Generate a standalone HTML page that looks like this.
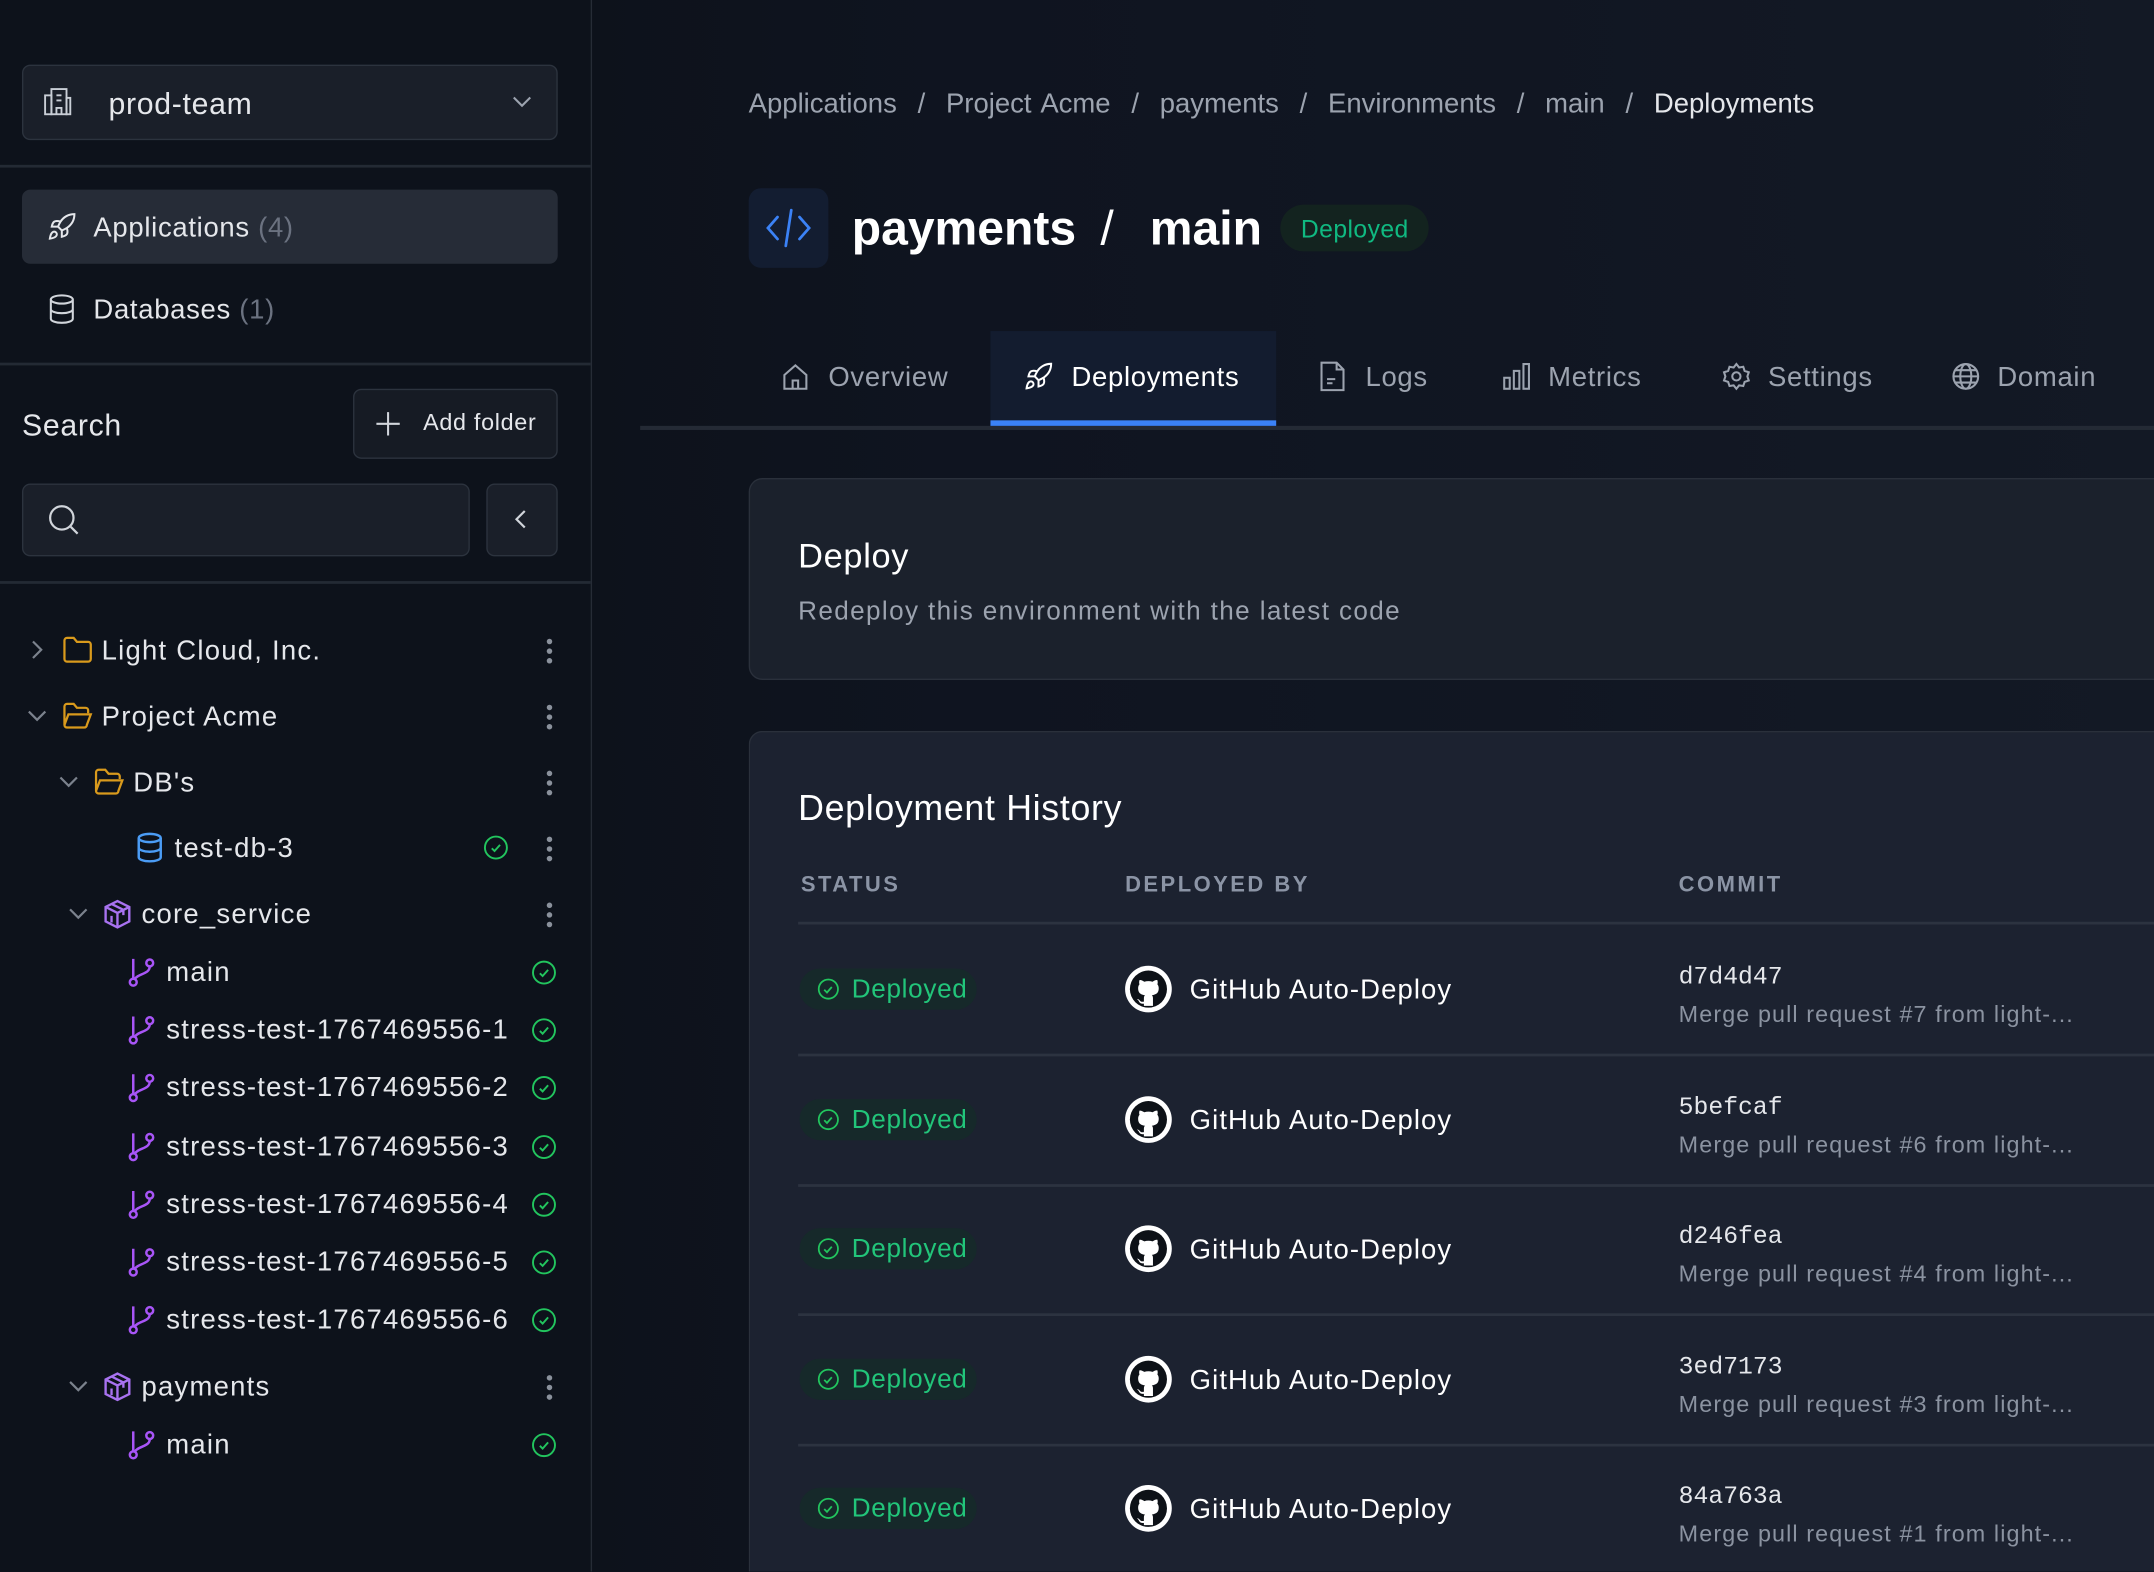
<!DOCTYPE html>
<html><head><meta charset="utf-8"><style>
html,body{margin:0;padding:0;width:2154px;height:1572px;overflow:hidden;background:#0e131c}
#w{position:absolute;left:0;top:0;width:1568px;height:1144px;overflow:hidden;transform:scale(1.37372);transform-origin:0 0;font-family:"Liberation Sans",sans-serif;color:#e5e7eb;background:linear-gradient(90deg,#0d121b 0,#0d121b 430px,#0f1420 700px,#131925 1568px);letter-spacing:0.5px}
.a{position:absolute}
.side{left:0;top:0;width:430px;height:1144px;background:#0d121b;border-right:1px solid #262c36}
.hr{position:absolute;left:0;width:430px;height:2px;background:#232a34}
.box{position:absolute;background:#1a1f29;border:1.5px solid #2c333e;border-radius:6px;box-sizing:border-box}
.t{position:absolute;white-space:nowrap;line-height:1}
.g{color:#6b7280}
svg{position:absolute;overflow:visible}
.dots{position:absolute;left:398px;width:4px}
.dots i{display:block;width:4px;height:4px;border-radius:2px;background:#8a919c;margin-bottom:3px}
.tab{position:absolute;top:264px;font-size:20px;color:#9ca3af}
.bdg{position:absolute;left:582px;width:129px;height:30px;border-radius:15px;background:#16292a}
.row{position:absolute;left:581px;width:1000px;height:2px;background:#2c3340}
.tr{font-size:20px;letter-spacing:0.9px}
.ti{position:absolute;top:149px;font-size:35px;font-weight:bold;color:#fff;letter-spacing:0;line-height:1;white-space:nowrap}
</style></head><body><div id="w">
<div class="a side"></div>
<div class="box" style="left:16px;top:47px;width:390px;height:55px"></div>
<svg style="left:31px;top:63px" width="22" height="22" viewBox="0 0 24 24" fill="none" stroke="#c9ced6" stroke-width="1.5"><rect x="2" y="7" width="5" height="15"/><rect x="7" y="2" width="12" height="20"/><rect x="19" y="9" width="3" height="13"/><path d="M11 7h4M11 11h4M11 22v-5h4v5"/></svg>
<div class="t" style="left:79px;top:65px;font-size:22px;color:#e5e7eb">prod-team</div>
<svg style="left:373px;top:70px" width="14" height="8" viewBox="0 0 14 8" fill="none" stroke="#9ca3af" stroke-width="1.5"><path d="M1 1l6 6 6-6"/></svg>
<div class="hr" style="top:120px"></div>
<div class="a" style="left:16px;top:138px;width:390px;height:54px;background:#262c37;border-radius:6px"></div>
<svg style="left:34px;top:154px" width="22" height="22" viewBox="0 0 24 24" fill="none" stroke="#e5e7eb" stroke-width="1.6"><path d="M4.5 16.5c-1.5 1.3-2 5-2 5s3.7-.5 5-2c.7-.8.7-2.1-.1-2.9-.8-.8-2.1-.8-2.9-.1zM12 15l-3-3a22 22 0 0 1 2-4A12.9 12.9 0 0 1 22 2c0 2.7-.8 7.5-6 11a22 22 0 0 1-4 2z"/><path d="M9 12H4s.6-3 2-4c1.6-1 5 0 5 0M12 15v5s3-.6 4-2c1-1.6 0-5 0-5"/></svg>
<div class="t" style="left:68px;top:156px;font-size:20px">Applications <span class="g">(4)</span></div>
<svg style="left:35px;top:214px" width="20" height="22" viewBox="0 0 20 22" fill="none" stroke="#d1d5db" stroke-width="1.5"><ellipse cx="10" cy="4" rx="8" ry="3"/><path d="M2 4v14c0 1.7 3.6 3 8 3s8-1.3 8-3V4M2 11c0 1.7 3.6 3 8 3s8-1.3 8-3"/></svg>
<div class="t" style="left:68px;top:216px;font-size:20px">Databases <span class="g">(1)</span></div>
<div class="hr" style="top:264px"></div>
<div class="t" style="left:16px;top:299px;font-size:22px">Search</div>
<div class="box" style="left:257px;top:283px;width:149px;height:51px;background:#161b24"></div>
<svg style="left:274px;top:300px" width="17" height="17" viewBox="0 0 17 17" stroke="#d1d5db" stroke-width="1.5"><path d="M8.5 0v17M0 8.5h17"/></svg>
<div class="t" style="left:308px;top:299px;font-size:17px">Add folder</div>
<div class="box" style="left:16px;top:352px;width:326px;height:53px"></div>
<svg style="left:35px;top:367px" width="24" height="24" viewBox="0 0 24 24" fill="none" stroke="#d1d5db" stroke-width="1.6"><circle cx="10" cy="10" r="8.5"/><path d="M16.5 16.5l5 5"/></svg>
<div class="box" style="left:354px;top:352px;width:52px;height:53px"></div>
<svg style="left:375px;top:371px" width="8" height="14" viewBox="0 0 8 14" fill="none" stroke="#d1d5db" stroke-width="1.6"><path d="M7 1L1 7l6 6"/></svg>
<div class="hr" style="top:423px"></div>

<svg style="left:23px;top:466px" width="8" height="14" viewBox="0 0 8 14" fill="none" stroke="#7b828d" stroke-width="1.6"><path d="M1 1l6 6-6 6"/></svg>
<svg style="left:45px;top:462px" width="23" height="22" viewBox="0 0 24 22" fill="none" stroke="#d99a1c" stroke-width="1.7"><path d="M2 4a2 2 0 0 1 2-2h5l2.5 3H20a2 2 0 0 1 2 2v11a2 2 0 0 1-2 2H4a2 2 0 0 1-2-2z"/></svg>
<div class="t tr" style="left:74px;top:464px">Light Cloud, Inc.</div>
<div class="dots" style="top:465px"><i></i><i></i><i></i></div>

<svg style="left:20px;top:517px" width="14" height="8" viewBox="0 0 14 8" fill="none" stroke="#7b828d" stroke-width="1.6"><path d="M1 1l6 6 6-6"/></svg>
<svg style="left:45px;top:510px" width="23" height="22" viewBox="0 0 24 22" fill="none" stroke="#d99a1c" stroke-width="1.7"><path d="M2 18V4a2 2 0 0 1 2-2h5l2.5 3H18a2 2 0 0 1 2 2v2M2 18l3-8h17l-3 8a2 2 0 0 1-2 2H4a2 2 0 0 1-2-2z"/></svg>
<div class="t tr" style="left:74px;top:512px">Project Acme</div>
<div class="dots" style="top:513px"><i></i><i></i><i></i></div>

<svg style="left:43px;top:565px" width="14" height="8" viewBox="0 0 14 8" fill="none" stroke="#7b828d" stroke-width="1.6"><path d="M1 1l6 6 6-6"/></svg>
<svg style="left:68px;top:558px" width="23" height="22" viewBox="0 0 24 22" fill="none" stroke="#d99a1c" stroke-width="1.7"><path d="M2 18V4a2 2 0 0 1 2-2h5l2.5 3H18a2 2 0 0 1 2 2v2M2 18l3-8h17l-3 8a2 2 0 0 1-2 2H4a2 2 0 0 1-2-2z"/></svg>
<div class="t tr" style="left:97px;top:560px">DB's</div>
<div class="dots" style="top:561px"><i></i><i></i><i></i></div>

<svg style="left:99px;top:606px" width="20" height="22" viewBox="0 0 20 22" fill="none" stroke="#4b9cf5" stroke-width="1.8"><ellipse cx="10" cy="4" rx="8" ry="3"/><path d="M2 4v14c0 1.7 3.6 3 8 3s8-1.3 8-3V4M2 11c0 1.7 3.6 3 8 3s8-1.3 8-3"/></svg>
<div class="t tr" style="left:127px;top:608px">test-db-3</div>
<svg style="left:352px;top:608px" width="18" height="18" viewBox="0 0 18 18" fill="none" stroke="#22c55e" stroke-width="1.4"><circle cx="9" cy="9" r="8"/><path d="M6 9.5l2 2 4-4.5"/></svg>
<div class="dots" style="top:609px"><i></i><i></i><i></i></div>

<svg style="left:50px;top:661px" width="14" height="8" viewBox="0 0 14 8" fill="none" stroke="#7b828d" stroke-width="1.6"><path d="M1 1l6 6 6-6"/></svg>
<svg style="left:74px;top:654px" width="23" height="23" viewBox="0 0 24 24" fill="none" stroke="#a872f0" stroke-width="1.8"><path d="M12 2l9 4.5v11L12 22l-9-4.5v-11zM3 6.5L12 11l9-4.5M12 11v11M7.5 4.2l9 4.5v4M7.5 13.3v5"/></svg>
<div class="t tr" style="left:103px;top:656px">core_service</div>
<div class="dots" style="top:657px"><i></i><i></i><i></i></div>

<svg style="left:74px;top:998px" width="23" height="23" viewBox="0 0 24 24" fill="none" stroke="#a872f0" stroke-width="1.8"><path d="M12 2l9 4.5v11L12 22l-9-4.5v-11zM3 6.5L12 11l9-4.5M12 11v11M7.5 4.2l9 4.5v4M7.5 13.3v5"/></svg>
<svg style="left:50px;top:1005px" width="14" height="8" viewBox="0 0 14 8" fill="none" stroke="#7b828d" stroke-width="1.6"><path d="M1 1l6 6 6-6"/></svg>
<div class="t tr" style="left:103px;top:1000px">payments</div>
<div class="dots" style="top:1001px"><i></i><i></i><i></i></div>

<div id="br"></div>

<div class="t" style="left:545px;top:66px;font-size:20px;color:#9ca3af;word-spacing:2px;letter-spacing:0">Applications &nbsp;/ &nbsp;Project Acme &nbsp;/ &nbsp;payments &nbsp;/ &nbsp;Environments &nbsp;/ &nbsp;main &nbsp;/ &nbsp;<span style="color:#e5e7eb">Deployments</span></div>
<div class="a" style="left:545px;top:137px;width:58px;height:58px;background:#131d31;border-radius:9px"></div>
<svg style="left:557px;top:151px" width="34" height="30" viewBox="0 0 34 30" fill="none" stroke="#3b82f6" stroke-width="2" stroke-linecap="round"><path d="M9 7L2 15l7 8M25 7l7 8-7 8M19 2l-4 26"/></svg>
<div class="ti" style="left:620px">payments</div>
<div class="ti" style="left:801px;font-weight:normal">/</div>
<div class="ti" style="left:837px">main</div>
<div class="a" style="left:932px;top:149px;width:108px;height:34px;border-radius:17px;background:#13231f"></div>
<div class="t" style="left:947px;top:158px;font-size:18px;color:#10b981;letter-spacing:0.3px">Deployed</div>

<div class="a" style="left:466px;top:310px;width:1102px;height:3px;background:#242a35"></div>
<div class="a" style="left:721px;top:241px;width:208px;height:66px;background:#131c2f"></div>
<div class="a" style="left:721px;top:306px;width:208px;height:4px;background:#3b82f6"></div>
<svg style="left:569px;top:264px" width="20" height="20" viewBox="0 0 20 20" fill="none" stroke="#9ca3af" stroke-width="1.5"><path d="M2 9l8-7 8 7v10H2zM8 19v-6h4v6"/></svg>
<div class="tab" style="left:603px">Overview</div>
<svg style="left:745px;top:263px" width="22" height="22" viewBox="0 0 24 24" fill="none" stroke="#fff" stroke-width="1.6"><path d="M4.5 16.5c-1.5 1.3-2 5-2 5s3.7-.5 5-2c.7-.8.7-2.1-.1-2.9-.8-.8-2.1-.8-2.9-.1zM12 15l-3-3a22 22 0 0 1 2-4A12.9 12.9 0 0 1 22 2c0 2.7-.8 7.5-6 11a22 22 0 0 1-4 2z"/><path d="M9 12H4s.6-3 2-4c1.6-1 5 0 5 0M12 15v5s3-.6 4-2c1-1.6 0-5 0-5"/></svg>
<div class="tab" style="left:780px;color:#fff">Deployments</div>
<svg style="left:961px;top:263px" width="18" height="22" viewBox="0 0 18 22" fill="none" stroke="#9ca3af" stroke-width="1.5"><path d="M1 1h11l5 5v15H1zM12 1v5h5M5 13h6M5 16h4"/></svg>
<div class="tab" style="left:994px">Logs</div>
<svg style="left:1094px;top:264px" width="20" height="20" viewBox="0 0 20 20" fill="none" stroke="#9ca3af" stroke-width="1.5"><rect x="1" y="11" width="4" height="8"/><rect x="8" y="6" width="4" height="13"/><rect x="15" y="1" width="4" height="18"/></svg>
<div class="tab" style="left:1127px">Metrics</div>
<svg style="left:1254px;top:264px" width="20" height="20" viewBox="0 0 20 20" fill="none" stroke="#9ca3af" stroke-width="1.5"><circle cx="10" cy="10" r="3"/><path d="M10 1l2 2.5 3-.5 1 3 3 1-1 3 1 3-3 1-1 3-3-.5-2 2.5-2-2.5-3 .5-1-3-3-1 1-3-1-3 3-1 1-3 3 .5z"/></svg>
<div class="tab" style="left:1287px">Settings</div>
<svg style="left:1421px;top:264px" width="20" height="20" viewBox="0 0 20 20" fill="none" stroke="#9ca3af" stroke-width="1.5"><circle cx="10" cy="10" r="9"/><ellipse cx="10" cy="10" rx="4" ry="9"/><path d="M1 10h18M2.5 5.5h15M2.5 14.5h15"/></svg>
<div class="tab" style="left:1454px">Domain</div>

<div class="a" style="left:545px;top:348px;width:1040px;height:147px;background:#1b212c;border:1.5px solid #2a303b;border-radius:10px;box-sizing:border-box"></div>
<div class="t" style="left:581px;top:393px;font-size:25px;color:#fff">Deploy</div>
<div class="t" style="left:581px;top:436px;font-size:19px;color:#9ca3af;letter-spacing:1px">Redeploy this environment with the latest code</div>

<div class="a" style="left:545px;top:532px;width:1040px;height:612px;background:#1c2230;border:1.5px solid #2a303b;border-bottom:none;border-radius:10px 10px 0 0;box-sizing:border-box"></div>
<div class="t" style="left:581px;top:575px;font-size:26px;color:#fff">Deployment History</div>
<div class="t" style="left:583px;top:637px;font-size:16px;font-weight:bold;letter-spacing:1.8px;color:#8b94a5">STATUS</div>
<div class="t" style="left:819px;top:637px;font-size:16px;font-weight:bold;letter-spacing:1.8px;color:#8b94a5">DEPLOYED BY</div>
<div class="t" style="left:1222px;top:637px;font-size:16px;font-weight:bold;letter-spacing:1.8px;color:#8b94a5">COMMIT</div>
<div class="row" style="top:671px"></div>
<div class="row" style="top:767px"></div>
<div class="row" style="top:862px"></div>
<div class="row" style="top:956px"></div>
<div class="row" style="top:1051px"></div>

<div id="rows"></div>
<script>
var b="";
var names=["main","stress-test-1767469556-1","stress-test-1767469556-2","stress-test-1767469556-3","stress-test-1767469556-4","stress-test-1767469556-5","stress-test-1767469556-6","main"];
var ys=[707,749,791,834,876,918,960,1051];
for(var j=0;j<8;j++){var y=ys[j];
b+='<svg style="left:93px;top:'+(y-10)+'px" width="20" height="22" viewBox="0 0 20 22" fill="none" stroke="#a855f7" stroke-width="1.8"><circle cx="4" cy="18" r="2.5"/><circle cx="16" cy="4" r="2.5"/><path d="M4 1v14.5M16 6.5c0 6-9 5-11 9.5"/></svg>';
b+='<div class="t tr" style="left:121px;top:'+(y-9)+'px">'+names[j]+'</div>';
b+='<svg style="left:387px;top:'+(y-8)+'px" width="18" height="18" viewBox="0 0 18 18" fill="none" stroke="#22c55e" stroke-width="1.4"><circle cx="9" cy="9" r="8"/><path d="M6 9.5l2 2 4-4.5"/></svg>';}
document.getElementById("br").outerHTML=b;
var d=[["d7d4d47","#7"],["5befcaf","#6"],["d246fea","#4"],["3ed7173","#3"],["84a763a","#1"]];
var h="";
for(var i=0;i<5;i++){var c=720+i*94.5;
h+='<div class="bdg" style="top:'+(c-15)+'px"></div>';
h+='<svg style="left:595px;top:'+(c-8)+'px" width="16" height="16" viewBox="0 0 16 16" fill="none" stroke="#22c55e" stroke-width="1.3"><circle cx="8" cy="8" r="7"/><path d="M5 8.5l2 2 3.5-4"/></svg>';
h+='<div class="t" style="left:620px;top:'+(c-9)+'px;font-size:19px;color:#22c57a">Deployed</div>';
h+='<svg style="left:818px;top:'+(c-18)+'px" width="36" height="36" viewBox="0 0 36 36"><circle cx="18" cy="18" r="17" fill="#fff"/><circle cx="18" cy="18" r="13.5" fill="#0d1117"/><path fill="#fff" d="M11.5 11.5c1 -.3 2.5.5 3.5 1.2a10 10 0 0 1 6 0c1-.7 2.5-1.5 3.5-1.2.3 1 .4 2 0 3 .7.8 1 1.8 1 3 0 3.5-2 4.5-5 5 .6.5.8 1.2.8 2.2v5.5h-6.6v-1.6c-2.3.4-3.3-.8-3.8-2-.3-.6-.8-1-1.3-1.2 .8-.3 1.6.2 2.2 1 .6.8 1.4 1 2.9.7v-2.4c0-1 .2-1.7.8-2.2-3-.5-5-1.5-5-5 0-1.2.3-2.2 1-3-.4-1-.3-2 0-3z"/></svg>';
h+='<div class="t" style="left:866px;top:'+(c-9)+'px;font-size:20px;color:#fff;letter-spacing:0.8px">GitHub Auto-Deploy</div>';
h+='<div class="t" style="left:1222px;top:'+(c-17)+'px;font-size:18px;font-family:\'Liberation Mono\',monospace;color:#e5e7eb;letter-spacing:0">'+d[i][0]+'</div>';
h+='<div class="t" style="left:1222px;top:'+(c+10)+'px;font-size:17px;color:#8b93a1;letter-spacing:0.8px">Merge pull request '+d[i][1]+' from light-...</div>';}
document.getElementById("rows").outerHTML=h;
</script>
</div></body></html>
